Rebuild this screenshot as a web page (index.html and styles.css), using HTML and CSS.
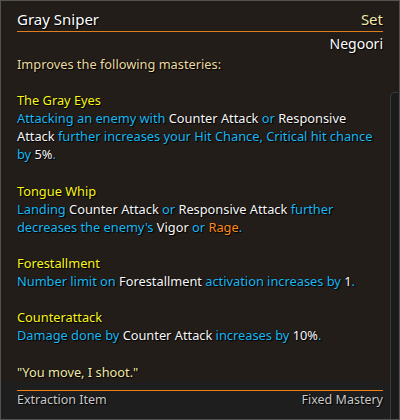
FILE: index.html
```html
<!DOCTYPE html>
<html>
<head>
<meta charset="utf-8">
<link rel="stylesheet" href="styles.css">
</head>
<body>
<div class="tip">
  <div class="main">
    <div class="head"><span class="title">Gray Sniper</span><span class="set">Set</span></div>
    <div class="sub">Negoori</div>
    <div class="body">
      <p class="intro">Improves the following masteries:</p>
      <div class="m">
        <div class="mt">The Gray Eyes</div>
        <div class="md">Attacking an enemy with <span class="w">Counter Attack</span> or <span class="w">Responsive Attack</span> further increases your Hit Chance, Critical hit chance by <span class="w">5%</span>.</div>
      </div>
      <div class="m">
        <div class="mt">Tongue Whip</div>
        <div class="md">Landing <span class="w">Counter Attack</span> or <span class="w">Responsive Attack</span> further decreases the enemy's <span class="w">Vigor</span> or <span class="o">Rage</span>.</div>
      </div>
      <div class="m">
        <div class="mt">Forestallment</div>
        <div class="md">Number limit on <span class="w">Forestallment</span> activation increases by <span class="w">1</span>.</div>
      </div>
      <div class="m">
        <div class="mt">Counterattack</div>
        <div class="md">Damage done by <span class="w">Counter Attack</span> increases by <span class="w">10%</span>.</div>
      </div>
      <p class="quote">"You move, I shoot."</p>
    </div>
  </div>
  <div class="foot">
    <div class="foot-in"><span>Extraction Item</span><span>Fixed Mastery</span></div>
  </div>
  <div class="scroll"></div>
</div>
</body>
</html>
```
FILE: styles.css
```css
html, body {
  margin: 0;
  padding: 0;
  background: #231d1a;
}
.tip {
  position: relative;
  width: 400px;
  height: 420px;
  box-sizing: border-box;
  border: 1px solid #525252;
  background: #231d1a;
  font-family: "Noto Sans", "Open Sans", sans-serif;
  display: flex;
  flex-direction: column;
  overflow: hidden;
  text-shadow: 0 0 1px #000, 1px 1px 1px #000;
}
.main {
  padding: 9px 16px 0 16px;
  height: 381px;
  flex: none;
  box-sizing: border-box;
}
.head {
  display: flex;
  justify-content: space-between;
  font-size: 15px;
  line-height: 18px;
  padding-bottom: 3px;
  border-bottom: 1px solid #e07d1c;
}
.title { color: #ffffff; }
.set { color: #f3eba8; }
.sub {
  margin-top: 3px;
  text-align: right;
  font-size: 14px;
  line-height: 18px;
  color: #ffffff;
}
.body {
  margin-top: 2px;
  font-size: 12.8px;
  line-height: 18.1px;
  color: #1cb9f2;
}
.body p { margin: 0; }
.intro { color: #ecdca2; }
.m { margin-top: 18.1px; }
.mt { color: #fbf81a; }
.w { color: #f8f8f8; }
.o { color: #ff8c1a; }
.quote { margin-top: 18.1px !important; color: #f3eba8; }
.foot {
  flex: 1;
  background: #1f1e1e;
  padding: 8px 16px 0 16px;
}
.foot-in {
  border-top: 1px solid #f07d10;
  padding-top: 1px;
  display: flex;
  justify-content: space-between;
  font-size: 12.5px;
  line-height: 16px;
  color: #cacaca;
}
.scroll {
  position: absolute;
  right: 1px;
  top: 91px;
  bottom: 0;
  width: 7px;
  background: #1b1b1b;
  border-left: 1px solid #3a3a3a;
  border-top: 1px solid #3a3a3a;
  border-top-left-radius: 5px;
}
```
